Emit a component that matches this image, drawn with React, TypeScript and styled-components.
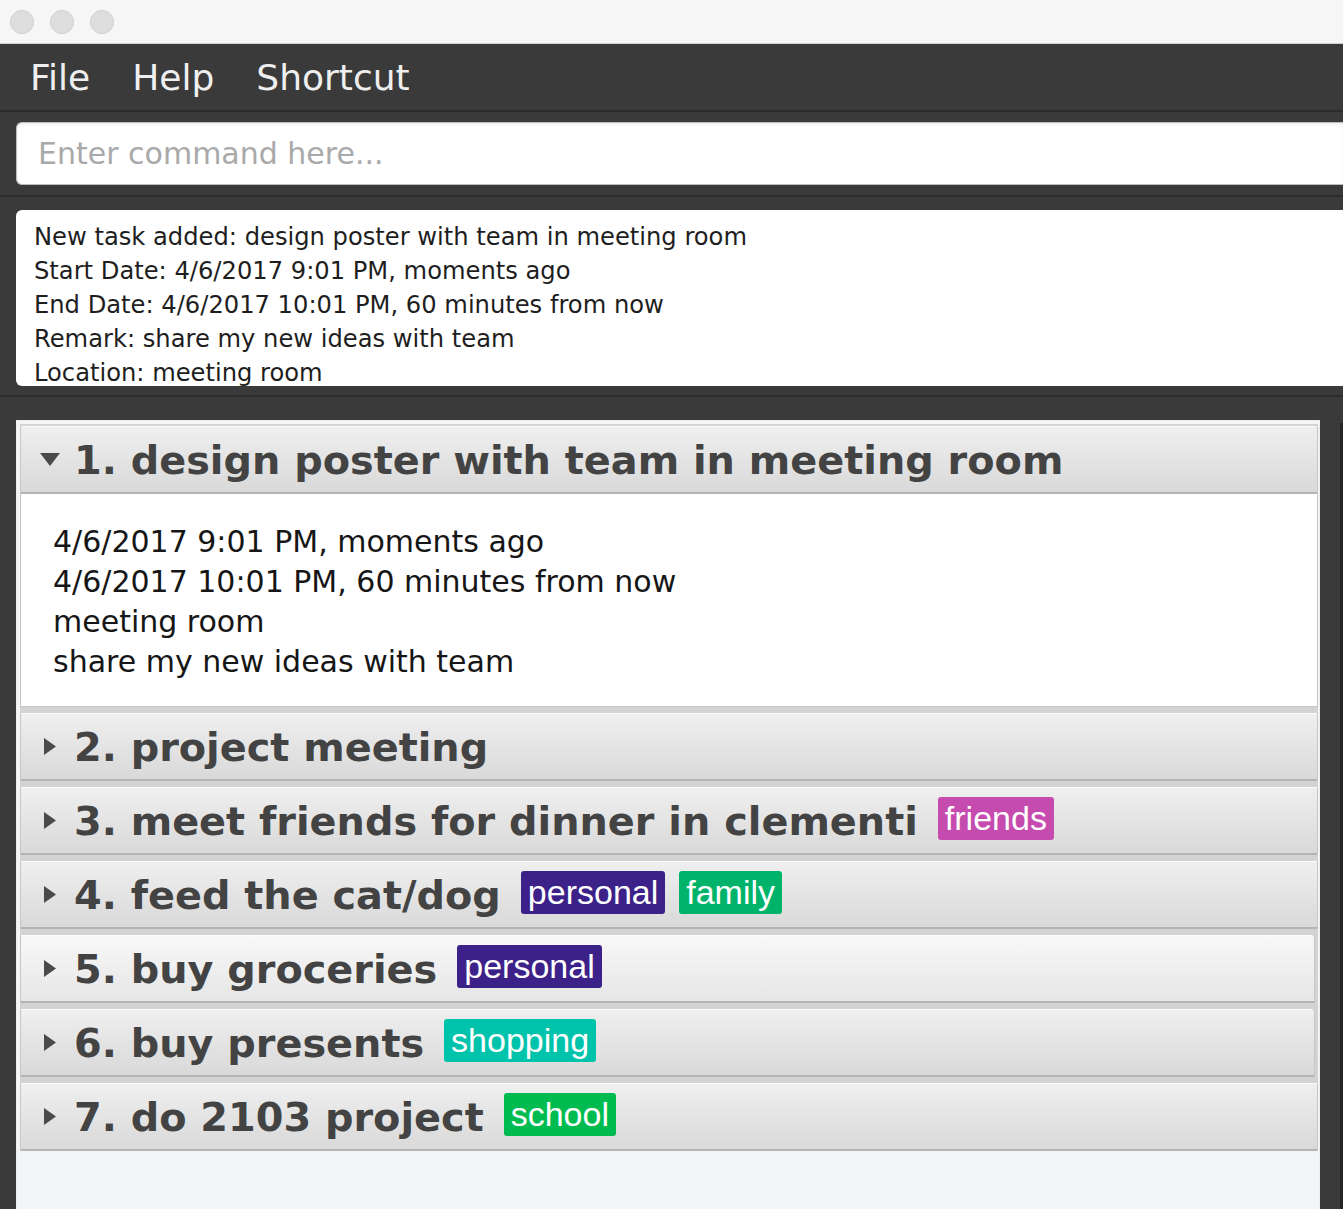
import styled, { createGlobalStyle } from "styled-components";

const GlobalStyle = createGlobalStyle`
  html, body {
    margin: 0;
    padding: 0;
    background: #3a3a3a;
  }
  * {
    box-sizing: border-box;
  }
`;

const Window = styled.div`
  width: 1343px;
  height: 1209px;
  overflow: hidden;
  display: flex;
  flex-direction: column;
  background: #3a3a3a;
  font-family: "DejaVu Sans", Verdana, sans-serif;
`;

const TitleBar = styled.div`
  flex: none;
  height: 44px;
  display: flex;
  align-items: center;
  gap: 16px;
  padding-left: 10px;
  background: #f6f6f6;
  border-bottom: 1px solid #d3d3d3;
`;

const Light = styled.span`
  width: 24px;
  height: 24px;
  border-radius: 50%;
  background: #dedede;
  border: 1px solid #cfcfcf;
`;

const MenuBar = styled.div`
  flex: none;
  height: 68px;
  display: flex;
  align-items: center;
  padding-left: 30px;
  background: #3a3a3a;
  border-bottom: 2px solid #2b2b2b;
`;

const MenuItem = styled.span`
  font-size: 36px;
  color: #efefef;
  margin-right: 42px;
`;

const CommandPane = styled.div`
  flex: none;
  padding: 10px 0 10px 16px;
  border-bottom: 2px solid #2c2c2c;
`;

const CommandBox = styled.input`
  display: block;
  width: 100%;
  height: 63px;
  padding: 0 0 0 21px;
  border: 1px solid #bdbdbd;
  border-right: none;
  border-radius: 6px 0 0 6px;
  background: #fff;
  font-family: "DejaVu Sans", Verdana, sans-serif;
  font-size: 30px;
  color: #222;
  outline: none;
  box-shadow: inset 0 2px 3px rgba(0, 0, 0, 0.06);
  &::placeholder {
    color: #a9a9a9;
  }
`;

const ResultPane = styled.div`
  flex: none;
  padding: 13px 0 9px 16px;
  border-bottom: 2px solid #2c2c2c;
`;

const ResultBox = styled.div`
  height: 176px;
  overflow: hidden;
  padding: 10px 18px;
  background: #fff;
  border-radius: 6px 0 0 6px;
`;

const ResultLine = styled.div`
  font-size: 24.2px;
  line-height: 34px;
  color: #1e1e1e;
  white-space: nowrap;
`;

const ListPane = styled.div`
  flex: 1;
  display: flex;
  padding: 23px 0 0 16px;
`;

const Panel = styled.div`
  flex: 0 0 1304px;
  background: #f4f5f7;
  border: 1px solid #ededed;
  border-bottom: none;
  padding: 3px 1px 0 3px;
`;

const Divider = styled.div`
  width: 3px;
  margin: 3px 0 0 auto;
  background: #262626;
`;

const CardList = styled.div`
  display: flex;
  flex-direction: column;
  gap: 6px;
  padding-top: 2px;
  background: #d3d3d3;
`;

const Card = styled.div<{ $inset?: boolean }>`
  margin-right: ${(p) => (p.$inset ? "3px" : "0")};
  border-left: 1px solid #c6c6c6;
  border-right: 1px solid #c6c6c6;
  border-top-right-radius: ${(p) => (p.$inset ? "4px" : "0")};
  overflow: hidden;
`;

const Header = styled.div<{ $lit?: boolean }>`
  height: 68px;
  display: flex;
  align-items: center;
  padding-left: 19px;
  background: ${(p) =>
    p.$lit
      ? "linear-gradient(#f8f8f8, #e6e6e6)"
      : "linear-gradient(#efefef, #d9d9d9)"};
  border-top: 1px solid #fbfbfb;
  border-bottom: 2px solid #b4b4b4;
`;

const Arrow = styled.span`
  width: 20px;
  height: 20px;
  flex: none;
  display: flex;
  align-items: center;
  justify-content: center;
`;

const Title = styled.span`
  margin-left: 14px;
  font-size: 39.8px;
  font-weight: bold;
  color: #434343;
  white-space: nowrap;
`;

const TagGroup = styled.div`
  display: flex;
  gap: 14px;
  margin: 0 0 5px 20px;
`;

const Tag = styled.span<{ $bg: string }>`
  height: 43px;
  display: flex;
  align-items: center;
  padding: 0 7px;
  border-radius: 3px;
  background: ${(p) => p.$bg};
  color: #fff;
  font-family: "Liberation Sans", Arial, sans-serif;
  font-size: 34px;
`;

const Details = styled.div`
  padding: 28px 32px 24px;
  background: #fff;
  border-bottom: 1px solid #c6c6c6;
`;

const DetailLine = styled.div`
  font-size: 30px;
  line-height: 40px;
  color: #161616;
  white-space: nowrap;
`;

const tagColors: Record<string, string> = {
  friends: "#c64bae",
  personal: "#3c2188",
  family: "#00b36b",
  shopping: "#00c3ab",
  school: "#00bb50",
};

const tasks = [
  {
    title: "1. design poster with team in meeting room",
    tags: [],
    details: [
      "4/6/2017 9:01 PM, moments ago",
      "4/6/2017 10:01 PM, 60 minutes from now",
      "meeting room",
      "share my new ideas with team",
    ],
  },
  { title: "2. project meeting", tags: [] },
  { title: "3. meet friends for dinner in clementi", tags: ["friends"] },
  { title: "4. feed the cat/dog", tags: ["personal", "family"] },
  { title: "5. buy groceries", tags: ["personal"], lit: true, inset: true },
  { title: "6. buy presents", tags: ["shopping"], inset: true },
  { title: "7. do 2103 project", tags: ["school"] },
];

function Chevron({ open }: { open: boolean }) {
  return open ? (
    <svg width="20" height="13" viewBox="0 0 20 13">
      <path d="M0 0 L20 0 L10 13 Z" fill="#4a4a4a" />
    </svg>
  ) : (
    <svg width="12" height="17" viewBox="0 0 12 17">
      <path d="M0 0 L12 8.5 L0 17 Z" fill="#4a4a4a" />
    </svg>
  );
}

export default function App() {
  return (
    <>
      <GlobalStyle />
      <Window>
        <TitleBar>
          <Light />
          <Light />
          <Light />
        </TitleBar>
        <MenuBar>
          <MenuItem>File</MenuItem>
          <MenuItem>Help</MenuItem>
          <MenuItem>Shortcut</MenuItem>
        </MenuBar>
        <CommandPane>
          <CommandBox placeholder="Enter command here..." />
        </CommandPane>
        <ResultPane>
          <ResultBox>
            <ResultLine>New task added: design poster with team in meeting room</ResultLine>
            <ResultLine>Start Date: 4/6/2017 9:01 PM, moments ago</ResultLine>
            <ResultLine>End Date: 4/6/2017 10:01 PM, 60 minutes from now</ResultLine>
            <ResultLine>Remark: share my new ideas with team</ResultLine>
            <ResultLine>Location: meeting room</ResultLine>
          </ResultBox>
        </ResultPane>
        <ListPane>
          <Panel>
            <CardList>
              {tasks.map((t) => (
                <Card key={t.title} $inset={t.inset}>
                  <Header $lit={t.lit}>
                    <Arrow>
                      <Chevron open={!!t.details} />
                    </Arrow>
                    <Title>{t.title}</Title>
                    {t.tags.length > 0 && (
                      <TagGroup>
                        {t.tags.map((tag) => (
                          <Tag key={tag} $bg={tagColors[tag]}>
                            {tag}
                          </Tag>
                        ))}
                      </TagGroup>
                    )}
                  </Header>
                  {t.details && (
                    <Details>
                      {t.details.map((d) => (
                        <DetailLine key={d}>{d}</DetailLine>
                      ))}
                    </Details>
                  )}
                </Card>
              ))}
            </CardList>
          </Panel>
          <Divider />
        </ListPane>
      </Window>
    </>
  );
}
